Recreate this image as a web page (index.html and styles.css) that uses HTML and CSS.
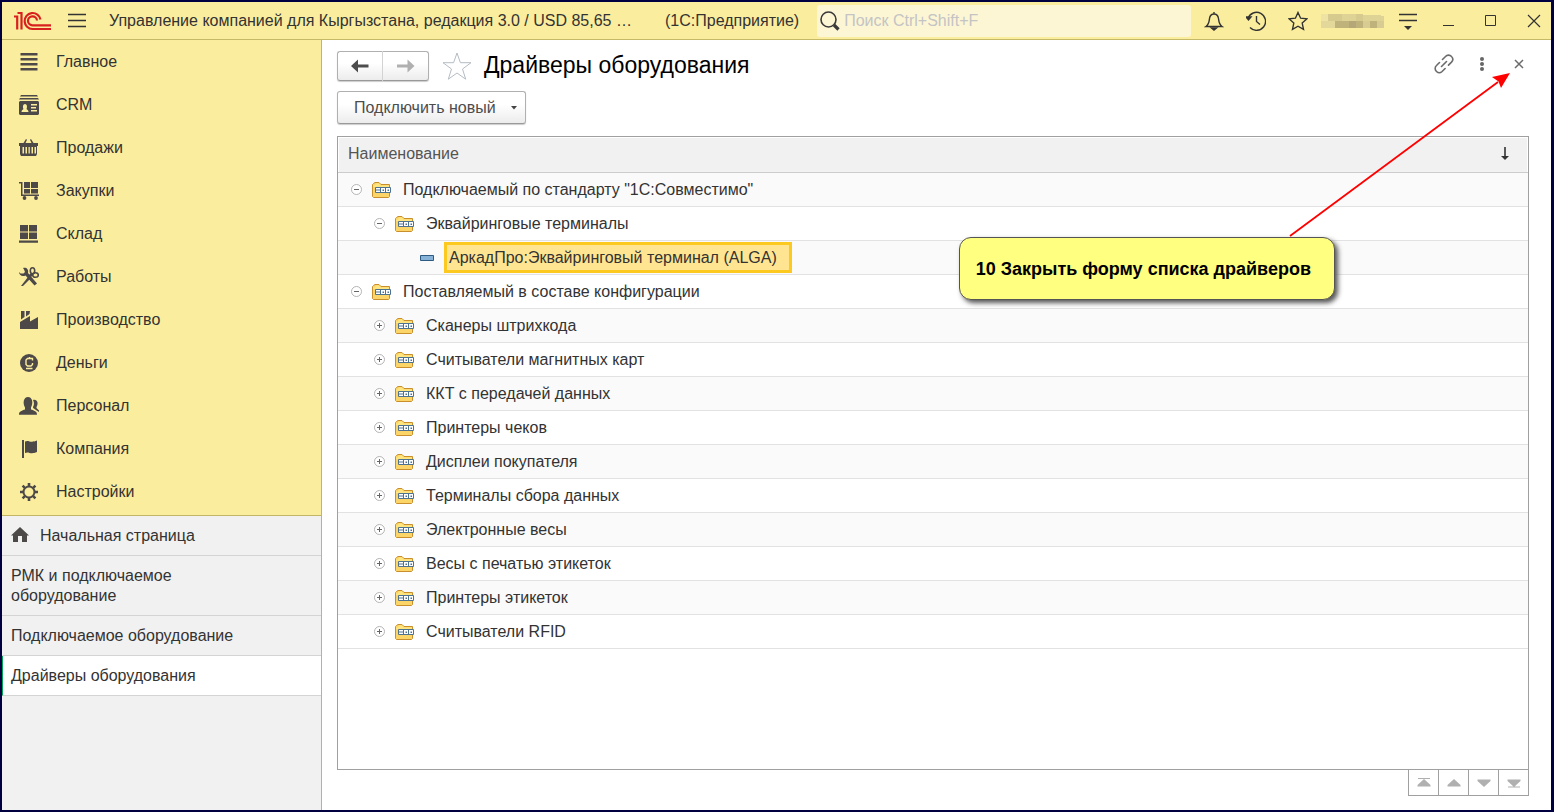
FILE: index.html
```html
<!DOCTYPE html>
<html lang="ru">
<head>
<meta charset="utf-8">
<title>Драйверы оборудования</title>
<link rel="stylesheet" href="styles.css">
</head>
<body>
<svg class="sprite" aria-hidden="true">
  <symbol id="folder" viewBox="0 0 20 18">
    <path d="M.5 15.500V3.500L1.500 2.500L3 1.500h4L9 3.500h8.500v12l-1 1h-15z" fill="#fbd568" stroke="#c98f2d"/>
    <path d="M1 4.500h2L4 2.500h3L8.500 4.500H17V6H1z" fill="#ffe680"/>
    <path d="M3.500 6.500h15v5h-15z" fill="#fff" stroke="#4e7390"/>
    <path d="M8.500 6.500v5M13.500 6.500v5M4 9H8" stroke="#4e7390"/>
    <path d="M10.500 8.500h1.500v1.500h-1.500zM15.500 8.500h1.500v1.500h-1.500z" fill="#4e7390"/>
  </symbol>
  <symbol id="minus" viewBox="0 0 11 11"><circle cx="5.500" cy="5.500" r="5" fill="#fff" stroke="#b4b4b4"/><path d="M3 5.500h5" stroke="#666"/></symbol>
  <symbol id="plus" viewBox="0 0 11 11"><circle cx="5.500" cy="5.500" r="5" fill="#fff" stroke="#b4b4b4"/><path d="M3 5.500h5M5.500 3v5" stroke="#666"/></symbol>
</svg>
<div class="window">
  <header class="titlebar">
    <svg class="logo" viewBox="0 0 38 20" fill="none" stroke="#d8201f" stroke-width="2.200"><path d="M0 5.500h3.200V18.500M3.500 2h4V18.500"/><path d="M26.500 8.500A8 8 0 1 0 18.500 18H37M23 9.500A4.500 4.500 0 1 0 18.500 14.300H37"/></svg>
    <button class="icon-btn menu-btn" aria-label="Меню"><svg width="18" height="16" viewBox="0 0 18 16" stroke="#333" stroke-width="1.300"><path d="M0 1.500h18M0 7.500h18M0 13.500h18"/></svg></button>
    <span class="app-title">Управление компанией для Кыргызстана, редакция 3.0 / USD 85,65 …</span>
    <span class="app-kind">(1С:Предприятие)</span>
    <label class="search">
      <svg width="20" height="20" viewBox="0 0 20 20" fill="none" stroke="#3a3a3a"><circle cx="8.500" cy="8.500" r="7.500" stroke-width="1.600"/><path d="M14 14l4.500 4.500" stroke-width="3.200"/></svg>
      <input type="search" placeholder="Поиск Ctrl+Shift+F" aria-label="Поиск">
    </label>
    <div class="tools">
      <button class="icon-btn" aria-label="Уведомления"><svg width="20" height="20" viewBox="0 0 20 20" fill="none" stroke="#333" stroke-width="1.400"><path d="M10 1v2M2 15.500c3-2 3-4 3.500-8C6 4.500 8 3 10 3s4 1.500 4.500 4.500c.5 4 .5 6 3.500 8z"/><path d="M7.500 17h5L10 19z" fill="#333"/></svg></button>
      <button class="icon-btn" aria-label="История"><svg width="20" height="20" viewBox="0 0 20 20" fill="none" stroke="#333" stroke-width="1.400"><path d="M2 7.500A9 9 0 1 1 4 16.500M10.500 5v5.500l3.500 3"/><path d="M0 6h5L2.500 9z" fill="#333"/></svg></button>
      <button class="icon-btn" aria-label="Избранное"><svg width="20" height="20" viewBox="0 0 20 20" fill="none" stroke="#333" stroke-width="1.400"><path d="M10 1.500l2.600 5.700 6.200.7-4.600 4.200 1.300 6.200-5.500-3.100-5.500 3.100 1.300-6.200L1.200 7.900l6.200-.7z"/></svg></button>
      <svg class="user" viewBox="0 0 63 14" shape-rendering="crispEdges"><path fill="#efe3a4" d="M0 0h7v7H0z"/><path fill="#e3d79a" d="M0 7h14v7H0z"/><path fill="#d6ca8e" d="M7 0h14v7H7zM35 0h7v7h-7z"/><path fill="#ded294" d="M21 0h14v7H21zM42 1h14l7 1v5H42z"/><path fill="#c0b27b" d="M14 7h14v7H14zM35 7h7v7h-7zM49 7h7v7h-7z"/><path fill="#b5a777" d="M28 7h7v7h-7z"/><path fill="#d9cc92" d="M42 7h7v7h-7zM56 7h7v7h-7z"/></svg>
      <button class="icon-btn" aria-label="Настройка панели"><svg width="18" height="18" viewBox="0 0 18 18" stroke="#333" stroke-width="1.500"><path d="M0 2.500h18M0 8.500h18"/><path d="M5 14h8l-4 4z" fill="#333" stroke="none"/></svg></button>
    </div>
    <div class="win-controls">
      <button class="icon-btn" aria-label="Свернуть"><svg width="12" height="12" viewBox="0 0 12 12" stroke="#333"><path d="M0 10.500h11"/></svg></button>
      <button class="icon-btn" aria-label="Развернуть"><svg width="12" height="12" viewBox="0 0 12 12" fill="none" stroke="#333"><path d="M.5.500h10v10H.5z"/></svg></button>
      <button class="icon-btn" aria-label="Закрыть"><svg width="14" height="14" viewBox="0 0 14 14" stroke="#333" stroke-width="1.200"><path d="M1 1l12 12M13 1L1 13"/></svg></button>
    </div>
  </header>
  <div class="body">
    <aside class="sidebar">
      <nav class="sections">
        <a href="#"><svg viewBox="0 0 20 20"><path d="M1.500 1h17v2.400h-17zM1.500 6h17v2.400h-17zM1.500 11h17v2.400h-17zM1.500 16h17v2.400h-17z"/></svg>Главное</a>
        <a href="#"><svg viewBox="0 0 20 20"><path d="M2 0h16l1 1.500H1zM1 3h18l1 1.500H0z"/><path fill-rule="evenodd" d="M1 6h18l1 1v12l-1 1H1l-1-1V7zM2.500 17h7c0-2-1.500-2.500-2-3 1-2 .5-5-1.500-5s-2.500 3-1.500 5c-.5.500-2 1-2 3zM12 9v1.500h6V9zm0 3v1.500h5V12zm0 3v1.500h6V15z"/></svg>CRM</a>
        <a href="#"><svg viewBox="0 0 20 20"><path d="M4.500 5L7 1l1 .8L6.500 5zM14.500 5L12 1l-1 .8L12.500 5zM0 5h19v3H0z"/><path fill-rule="evenodd" d="M1 8h17v8l-1 2H2l-1-2zM3.500 9v6.500H5V9zm3 0v6.500H8V9zm3 0v6.500h1.300V9zm3 0v6.500H14V9zm3 0v6.500H17V9z"/></svg>Продажи</a>
        <a href="#"><svg viewBox="0 0 20 20"><path d="M5 1h6v6H5zM12 1h7v6h-7zM5 8h6v4.500H5zM12 8h7v4.500h-7zM0 1h3.500v12.500H20V15H2V2.500H0z"/><circle cx="5.500" cy="17" r="1.900"/><circle cx="17" cy="17" r="1.900"/></svg>Закупки</a>
        <a href="#"><svg viewBox="0 0 20 20"><path d="M1 1h8v6.500H1zM10 1h8v6.500h-8zM1 8.500h8V15H1zM10 8.500h8V15h-8zM0 16.500h19v2.300H0z"/></svg>Склад</a>
        <a href="#"><svg viewBox="0 0 20 20"><path d="M4 1c3-1 6 1 5 5l9 10.500-2.500 2L6.500 8.500C3 10 0 8 0 5l1.500 1.500h3L6 5 5 2.500z"/><path d="M9 10l2 2-7 7H2z"/><path d="M10 10l3-3" stroke="#4c4948" stroke-width="3"/><g fill="none" stroke="#4c4948" stroke-width="1.600"><ellipse cx="13.500" cy="3.800" rx="2.200" ry="3"/><ellipse cx="16.500" cy="8" rx="2.800" ry="2.300"/></g></svg>Работы</a>
        <a href="#"><svg viewBox="0 0 20 20"><path d="M1 19v-7l10-6v5.500L19 7v12zM2 1h3.500v6L2 9.500zM7 1h4L10.500 4 7 6.500z"/></svg>Производство</a>
        <a href="#"><svg viewBox="0 0 20 20"><circle cx="10" cy="10" r="9"/><path d="M13.500 7.500V5.500h-5L7 7v4.500L8.500 13H12l1.500-1.500V10M7 15.500h6.500M10.500 4v2" fill="none" stroke="#fbed9e" stroke-width="1.400"/></svg>Деньги</a>
        <a href="#"><svg viewBox="0 0 20 20"><path d="M0 18.800c0-3 1-3.500 6-5.300v-2C3.500 7 4.500 1 9 1s5.500 6 3 10.500v2c5 1.800 6 2.300 6 5.300z"/><path d="M14 4c4-1.500 6 3 3.500 7v1l2.500 2.500V16l-4.500-3c-1-.5-1.500-1-1.500-2 1-2 1.500-4 0-7z"/></svg>Персонал</a>
        <a href="#"><svg viewBox="0 0 20 20"><path d="M3 1h2v18H3zM6 2.500c4-2 5 2 12-1v11.500c-7 3-8-1-12 1z"/></svg>Компания</a>
        <a href="#"><svg viewBox="0 0 20 20"><g fill="none" stroke="#4c4948"><circle cx="10" cy="10" r="5.500" stroke-width="2"/><path stroke-width="2.600" d="M10 1v3M10 16v3M1 10h3M16 10h3M3.600 3.600l2.200 2.200M14.200 14.200l2.200 2.200M3.600 16.400l2.200-2.200M14.200 5.800l2.200-2.200"/></g></svg>Настройки</a>
      </nav>
      <nav class="opened">
        <a href="#" class="home"><svg width="18" height="18" viewBox="0 0 18 18"><path d="M9 0l9 8.500h-2V15h-5V9H7v6H2V8.500H0z" fill="#4c4948"/></svg>Начальная страница</a>
        <a href="#"><span>РМК и подключаемое оборудование</span></a>
        <a href="#">Подключаемое оборудование</a>
        <a href="#" class="current" aria-current="page">Драйверы оборудования</a>
      </nav>
    </aside>
    <main class="page">
      <div class="page-head">
        <div class="history">
          <button class="grad" aria-label="Назад"><svg width="18" height="14" viewBox="0 0 18 14" fill="#4d4d4d"><path d="M0 7l7-6.500v5h10.500v3H7v5z"/></svg></button>
          <button class="grad" aria-label="Вперёд"><svg width="18" height="14" viewBox="0 0 18 14" fill="#b0b0b0"><path d="M17.500 7l-7-6.500v5H0v3h10.500v5z"/></svg></button>
        </div>
        <button class="icon-btn fav" aria-label="В избранное"><svg width="30" height="28" viewBox="0 0 30 28" fill="#fff" stroke="#b5bcc4"><path d="M15 1l3.400 9.700H29l-8.500 6.300 3.200 10.200L15 21l-8.700 6.200L9.500 17 1 10.700h10.600z"/></svg></button>
        <h1>Драйверы оборудования</h1>
        <div class="page-tools">
          <button class="icon-btn" aria-label="Ссылка"><svg width="20" height="20" viewBox="0 0 20 20" fill="none" stroke="#6b6b6b" stroke-width="1.600" stroke-linecap="round"><path d="M8.500 5.500l3-3a4 4 0 0 1 6 0c1.800 1.800 1.500 4 0 5.600l-3 3M5.500 8.500l-3 3a4 4 0 0 0 0 6c1.800 1.600 4 1.500 5.600 0l3-3M7.500 12.500l5-5"/></svg></button>
          <button class="icon-btn" aria-label="Ещё"><svg width="6" height="16" viewBox="0 0 6 16" fill="#666"><circle cx="3" cy="3" r="2"/><circle cx="3" cy="8" r="2"/><circle cx="3" cy="13" r="2"/></svg></button>
          <button class="icon-btn" aria-label="Закрыть форму"><svg width="10" height="10" viewBox="0 0 10 10" stroke="#6b6b6b" stroke-width="1.500"><path d="M1 1l8 8M9 1L1 9"/></svg></button>
        </div>
      </div>
      <div class="commands"><button class="grad connect">Подключить новый<svg width="6" height="4" viewBox="0 0 6 4" fill="#444"><path d="M0 0h6L3 3.500z"/></svg></button></div>
      <div class="list">
        <table>
          <thead><tr><th scope="col"><div class="head-cell">Наименование<svg width="8" height="14" viewBox="0 0 8 14" fill="#333"><path d="M3.200 0h1.600v9H8L4 13 0 9h3.200z"/></svg></div></th></tr></thead>
          <tbody>
            <tr><td><div class="node"><svg class="exp"><use href="#minus"/></svg><svg class="fold"><use href="#folder"/></svg>Подключаемый по стандарту "1С:Совместимо"</div></td></tr>
            <tr><td><div class="node l1"><svg class="exp"><use href="#minus"/></svg><svg class="fold"><use href="#folder"/></svg>Эквайринговые терминалы</div></td></tr>
            <tr><td><div class="node l2"><svg class="leaf" viewBox="0 0 14 6"><path d="M.5.500h13v5H.5z" fill="#85b2d6" stroke="#2c5a80"/></svg><span class="selected">АркадПро:Эквайринговый терминал (ALGA)</span></div></td></tr>
            <tr><td><div class="node"><svg class="exp"><use href="#minus"/></svg><svg class="fold"><use href="#folder"/></svg>Поставляемый в составе конфигурации</div></td></tr>
            <tr><td><div class="node l1"><svg class="exp"><use href="#plus"/></svg><svg class="fold"><use href="#folder"/></svg>Сканеры штрихкода</div></td></tr>
            <tr><td><div class="node l1"><svg class="exp"><use href="#plus"/></svg><svg class="fold"><use href="#folder"/></svg>Считыватели магнитных карт</div></td></tr>
            <tr><td><div class="node l1"><svg class="exp"><use href="#plus"/></svg><svg class="fold"><use href="#folder"/></svg>ККТ с передачей данных</div></td></tr>
            <tr><td><div class="node l1"><svg class="exp"><use href="#plus"/></svg><svg class="fold"><use href="#folder"/></svg>Принтеры чеков</div></td></tr>
            <tr><td><div class="node l1"><svg class="exp"><use href="#plus"/></svg><svg class="fold"><use href="#folder"/></svg>Дисплеи покупателя</div></td></tr>
            <tr><td><div class="node l1"><svg class="exp"><use href="#plus"/></svg><svg class="fold"><use href="#folder"/></svg>Терминалы сбора данных</div></td></tr>
            <tr><td><div class="node l1"><svg class="exp"><use href="#plus"/></svg><svg class="fold"><use href="#folder"/></svg>Электронные весы</div></td></tr>
            <tr><td><div class="node l1"><svg class="exp"><use href="#plus"/></svg><svg class="fold"><use href="#folder"/></svg>Весы с печатью этикеток</div></td></tr>
            <tr><td><div class="node l1"><svg class="exp"><use href="#plus"/></svg><svg class="fold"><use href="#folder"/></svg>Принтеры этикеток</div></td></tr>
            <tr><td><div class="node l1"><svg class="exp"><use href="#plus"/></svg><svg class="fold"><use href="#folder"/></svg>Считыватели RFID</div></td></tr>
          </tbody>
        </table>
      </div>
      <div class="pager">
        <button aria-label="В начало"><svg viewBox="0 0 14 10"><path d="M1 0h12v1H1zM7 1l6.500 6v1.500H.5V7z"/></svg></button>
        <button aria-label="Вверх"><svg viewBox="0 0 14 10"><path d="M7 1l6.500 6v1.500H.5V7z"/></svg></button>
        <button aria-label="Вниз"><svg viewBox="0 0 14 10"><path d="M7 9L.5 3V1.500h13V3z"/></svg></button>
        <button aria-label="В конец"><svg viewBox="0 0 14 10"><path d="M7 9L.5 3V1.500h13V3zM1 8.500h12v1H1z"/></svg></button>
      </div>
      <svg class="arrow" viewBox="0 0 222 166"><path d="M1 164L209 10" stroke="#f00" stroke-width="1.800"/><path d="M221 1l-9 15-2.500-6.500-6.500-4.500z" fill="#f00"/></svg>
      <div class="callout">10 Закрыть форму списка драйверов</div>
    </main>
  </div>
</div>
</body>
</html>
```
FILE: styles.css
```css
* { box-sizing: border-box; }
body { margin: 0; font: 16px/20px "Liberation Sans", Arial, sans-serif; color: #333; }
svg { display: block; flex: none; }
a { color: inherit; text-decoration: none; }
button { font: inherit; color: inherit; padding: 0; cursor: pointer; }
.sprite { position: absolute; width: 0; height: 0; }
.window { min-height: 100vh; display: flex; flex-direction: column; border: 2px solid #000040; border-right-width: 3px; background: #fff; }

.titlebar { display: flex; align-items: center; height: 38px; padding: 0 10px 0 12px; background: #fbed9e; border-bottom: 1px solid #c5b866; white-space: nowrap; }
.logo { width: 38px; height: 20px; }
.icon-btn { display: flex; align-items: center; justify-content: center; border: 0; background: none; }
.menu-btn { margin: 0 23px 0 16px; }
.app-title { flex: 0 0 544px; }
.app-kind { margin: 0 18px 0 12px; }
.search { flex: 1; display: flex; align-items: center; gap: 4px; height: 32px; padding: 0 3px; border-radius: 3px; background: #fdf6d5; min-width: 0; }
.search input { flex: 1; min-width: 0; border: 0; padding: 0; outline: 0; background: none; font: inherit; }
.search input::placeholder { color: #c4c4c4; opacity: 1; }
.tools { display: flex; align-items: center; gap: 22px; margin-left: 13px; }
.user { width: 63px; height: 14px; margin: 0 -7px 0 -9px; }
.win-controls { display: flex; align-items: center; gap: 30px; margin-left: 26px; }

.body { flex: 1; display: flex; }
.sidebar { width: 320px; flex: none; background: #f1f1f1; border-right: 1px solid #c2b566; }
.sections { display: flex; flex-direction: column; padding-bottom: 2px; background: #fbed9e; border-bottom: 1px solid #c2b566; }
.sections a { display: flex; align-items: center; gap: 17px; height: 43px; padding-left: 17px; }
.sections svg { width: 20px; height: 20px; fill: #4c4948; }
.opened { display: flex; flex-direction: column; }
.opened a { padding: 10px 80px 9px 9px; border-bottom: 1px solid #d4d4d4; }
.opened .home { display: flex; align-items: center; gap: 11px; }
.opened .current { padding-left: 8px; border-left: 1px solid #00a651; background: #fff; }

.page { position: relative; flex: 1; min-width: 0; display: flex; flex-direction: column; padding: 10px 22px 14px 15px; }
.page-head { display: flex; align-items: center; height: 31px; }
.history { display: flex; }
.grad { display: flex; align-items: center; justify-content: center; border: 1px solid #b0b0b0; border-bottom-color: #999; border-radius: 3px; background: linear-gradient(#fff 40%, #ececec); box-shadow: 0 1px 1px #ccc; }
.history .grad { width: 46px; height: 30px; }
.history .grad:first-child { border-radius: 3px 0 0 3px; border-right-color: #d4d4d4; }
.history .grad:last-child { border-radius: 0 3px 3px 0; border-left: 0; }
.fav { margin: 0 12px 0 13px; }
h1 { margin: 0; padding-bottom: 2px; font-size: 23px; line-height: 28px; font-weight: 400; color: #000; }
.page-tools { margin-left: auto; display: flex; align-items: center; padding: 0 5px 4px 0; }
.page-tools .icon-btn + .icon-btn { margin-left: 25px; }
.page-tools .icon-btn:last-child { margin-left: 29px; }
.commands { display: flex; margin: 10px 0 12px; }
.connect { min-width: 189px; height: 33px; justify-content: space-between; padding: 0 8px 0 16px; color: #4d4d4d; }

.list { flex: 1; border: 1px solid #a0a0a0; }
table { width: 100%; border-collapse: collapse; }
th { padding: 1px 1px 0; font-weight: 400; text-align: left; color: #555; border-bottom: 1px solid #ccc; }
.head-cell { display: flex; align-items: center; justify-content: space-between; height: 34px; padding: 0 18px 2px 9px; background: #f1f1f1; }
td { padding: 0; border-bottom: 1px solid #e2e2e2; }
tbody tr:nth-child(odd) { background: #fafafa; }
.node { display: flex; align-items: center; height: 33px; padding-left: 13px; }
.l1 { padding-left: 36px; }
.l2 { padding-left: 82px; }
.exp { width: 11px; height: 11px; }
.fold { width: 20px; height: 18px; margin: 0 11px 0 10px; }
.leaf { width: 14px; height: 6px; margin-right: 10px; }
.selected { min-width: 348px; padding: 2px; border: 3px solid #fcc920; background: #ffe591; line-height: 21px; }

.pager { display: flex; justify-content: flex-end; }
.pager button { display: flex; align-items: center; justify-content: center; width: 30px; height: 26px; border: 1px solid #a0a0a0; border-top: 0; border-right: 0; background: #fff; }
.pager button:last-child { width: 31px; border-right: 1px solid #a0a0a0; }
.pager svg { width: 14px; height: 10px; fill: #b0b0b0; }

.arrow { position: absolute; top: 32px; right: 40px; width: 222px; height: 166px; fill: none; pointer-events: none; }
.callout { position: absolute; top: 197px; right: 216px; padding: 21px 23px 20px 16px; border: 1px solid #555; border-radius: 12px; background: #ffff80; box-shadow: 3px 3px 5px #555; color: #000; font-weight: 700; font-size: 18px; }
```
